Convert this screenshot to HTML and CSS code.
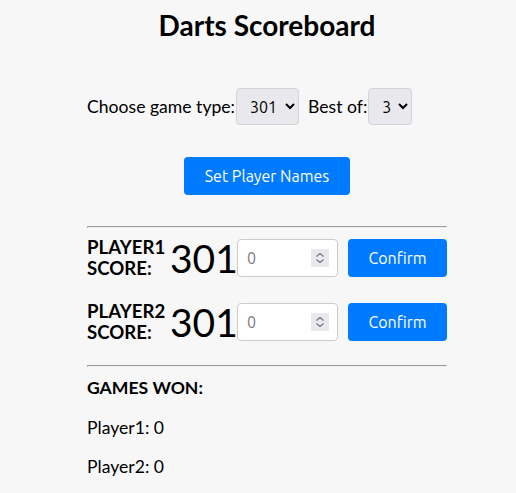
FILE: index.html
```html
<!DOCTYPE html>
<html>
<head>
<meta charset="utf-8">
<link rel="stylesheet" href="styles.css">
</head>
<body>
<div class="wrap">
  <h1 class="title">Darts Scoreboard</h1>
  <div class="settings">
    <label>Choose game type:</label>
    <select class="sel sel-game"><option>301</option><option>501</option></select>
    <label class="best">Best of:</label>
    <select class="sel sel-best"><option>3</option><option>5</option></select>
  </div>
  <div class="names-row">
    <button class="btn btn-names">Set Player Names</button>
  </div>
  <hr class="rule">
  <div class="player">
    <div class="plabel">PLAYER1<br>SCORE:</div>
    <div class="score">301</div>
    <span class="numwrap">
      <input class="num" type="number" placeholder="0">
      <span class="spin"><svg width="18" height="18" viewBox="0 0 18 18"><path d="M5.5 7.5 9 4.5 12.5 7.5M5.5 10.5 9 13.5 12.5 10.5" fill="none" stroke="#6f6f75" stroke-width="1.1"/></svg></span>
    </span>
    <button class="btn btn-confirm">Confirm</button>
  </div>
  <div class="player">
    <div class="plabel">PLAYER2<br>SCORE:</div>
    <div class="score">301</div>
    <span class="numwrap">
      <input class="num" type="number" placeholder="0">
      <span class="spin"><svg width="18" height="18" viewBox="0 0 18 18"><path d="M5.5 7.5 9 4.5 12.5 7.5M5.5 10.5 9 13.5 12.5 10.5" fill="none" stroke="#6f6f75" stroke-width="1.1"/></svg></span>
    </span>
    <button class="btn btn-confirm">Confirm</button>
  </div>
  <hr class="rule rule2">
  <div class="won">GAMES WON:</div>
  <p class="line">Player1: 0</p>
  <p class="line">Player2: 0</p>
</div>
</body>
</html>
```
FILE: styles.css
```css
html, body {
  background: #f7f7f7;
}
body {
  margin: 8px;
  padding-left: 18px;
  font-family: Lato, "Liberation Sans", sans-serif;
  font-size: 17.6px;
  color: #000;
}
.wrap {
  width: 360px;
  margin: 0 auto;
}
.title {
  font-size: 28px;
  font-weight: 700;
  text-align: center;
  margin: 1px 0 0;
  line-height: 32px;
}
.settings {
  display: flex;
  align-items: center;
  margin-top: 47px;
  height: 37px;
}
.best {
  margin-left: 9px;
}
.sel {
  height: 37px;
  margin-left: 1px;
  font-family: Ubuntu, "Open Sans", sans-serif;
  font-size: 16px;
  background-color: #e9e9ed;
  border: 1px solid #d4d4d8;
  border-radius: 4px;
  padding: 0 4px 0 9px;
  color: #000;
}
.sel-game { width: 63px; }
.sel-best { width: 44px; }
.names-row {
  display: flex;
  justify-content: center;
  margin-top: 32px;
}
.btn {
  background: #007bff;
  color: #fff;
  border: none;
  border-radius: 4px;
  font-family: Ubuntu, "Open Sans", sans-serif;
  font-size: 16px;
  height: 38px;
}
.btn-names {
  width: 166px;
}
.rule {
  margin: 31px 0 9px;
}
.player {
  display: flex;
  align-items: center;
  height: 42px;
  margin-bottom: 22px;
}
.plabel {
  font-weight: 700;
  font-size: 18.6px;
  line-height: 21px;
  width: 83px;
}
.score {
  font-size: 39px;
  line-height: 42px;
  width: 67px;
}
.numwrap {
  position: relative;
  display: block;
  width: 101px;
  height: 38px;
}
.num {
  display: block;
  width: 101px;
  height: 38px;
  margin: 0;
  box-sizing: border-box;
  border: 1px solid #cccccc;
  border-radius: 4px;
  background: #fff;
  font-family: Ubuntu, "Open Sans", sans-serif;
  font-size: 16px;
  padding: 0 30px 0 9px;
}
.num::placeholder {
  color: #7a7a7a;
}
.num::-webkit-inner-spin-button,
.num::-webkit-outer-spin-button {
  -webkit-appearance: none;
  margin: 0;
}
.spin {
  position: absolute;
  right: 9px;
  top: 10px;
  width: 18px;
  height: 18px;
  background: #e9e9ed;
  display: block;
}
.spin svg {
  display: block;
}
.btn-confirm {
  width: 99px;
  margin-left: 10px;
}
.rule2 {
  margin-top: 0;
  margin-bottom: 10px;
}
.won {
  font-weight: 700;
  line-height: 22px;
}
.line {
  margin: 18px 0 0;
  line-height: 22px;
}
.line + .line {
  margin-top: 17px;
}
```
